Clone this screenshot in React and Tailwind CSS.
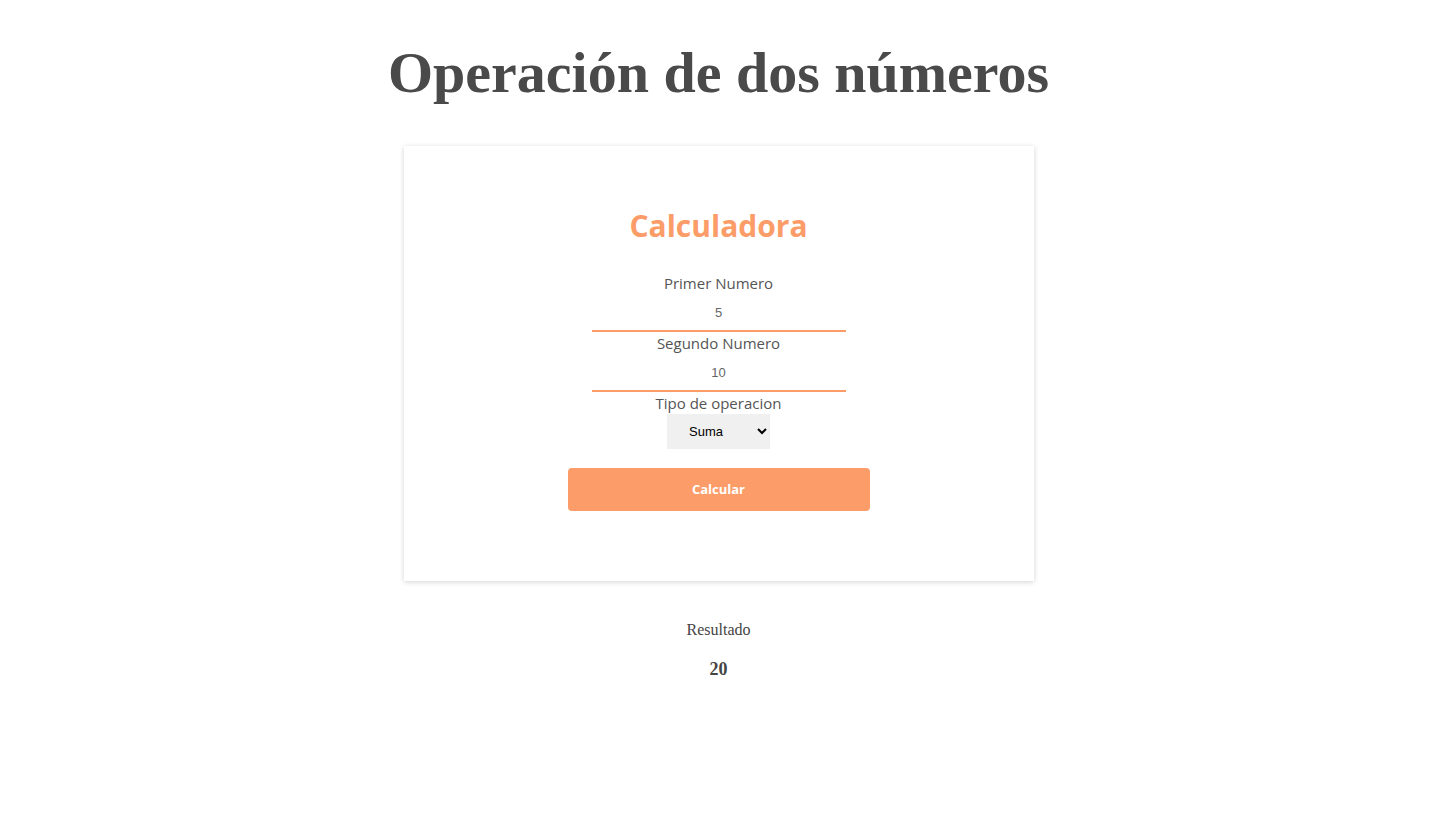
import React, { useState } from 'react';

function App() {
  const [primero, setPrimero] = useState("5");
  const [segundo, setSegundo] = useState("10");
  const [tipo, setTipo] = useState("suma");
  const [resultado, setResultado] = useState(20);

  const calcular = () => {
    const a = Number(primero);
    const b = Number(segundo);
    if (tipo === "suma") setResultado(a + b);
    else if (tipo === "resta") setResultado(a - b);
    else if (tipo === "multiplicacion") setResultado(a * b);
    else setResultado(b !== 0 ? a / b : 0);
  };

  return (
    <div className="min-h-screen bg-white flex flex-col items-center font-['Liberation_Serif',serif]">
      <h1 className="mt-[38px] text-[58px] leading-[70px] font-bold text-[#4a4a4a]">Operación de dos números</h1>

      {/* Tarjeta */}
      <div className="mt-[38px] w-[630px] h-[435px] bg-white shadow-[0_1px_5px_rgba(0,0,0,0.18)] flex flex-col items-center pt-[60px] font-['Open_Sans',sans-serif]">
        <h2 className="text-[30px] leading-[40px] font-bold text-[#fc9c69]">Calculadora</h2>

        <label className="mt-[26px] text-[15px] leading-[22px] text-[#555]">Primer Numero</label>
        <input
          value={primero}
          onChange={(e) => setPrimero(e.target.value)}
          className="w-[254px] h-[38px] text-center text-[13px] text-[#666] border-b-2 border-[#fc9c69] outline-none font-['Liberation_Sans',sans-serif]"
        />

        <label className="text-[15px] leading-[22px] text-[#555]">Segundo Numero</label>
        <input
          value={segundo}
          onChange={(e) => setSegundo(e.target.value)}
          className="w-[254px] h-[38px] text-center text-[13px] text-[#666] border-b-2 border-[#fc9c69] outline-none font-['Liberation_Sans',sans-serif]"
        />

        <label className="text-[15px] leading-[22px] text-[#555]">Tipo de operacion</label>
        <select
          value={tipo}
          onChange={(e) => setTipo(e.target.value)}
          className="w-[103px] h-[35px] bg-[#f0f0f0] text-[13px] text-black pl-[18px] outline-none font-['Liberation_Sans',sans-serif]"
        >
          <option value="suma">Suma</option>
          <option value="resta">Resta</option>
          <option value="multiplicacion">Multiplicacion</option>
          <option value="division">Division</option>
        </select>

        <button
          onClick={calcular}
          className="mt-[19px] w-[302px] h-[43px] bg-[#fc9c69] rounded-[4px] text-white text-[13px] font-bold"
        >
          Calcular
        </button>
      </div>

      <p className="mt-[38px] text-[16px] leading-[22px] text-[#444]">Resultado</p>
      <p className="mt-[16px] text-[18px] leading-[24px] font-bold text-[#444]">{resultado}</p>
    </div>
  );
}

export default App;
